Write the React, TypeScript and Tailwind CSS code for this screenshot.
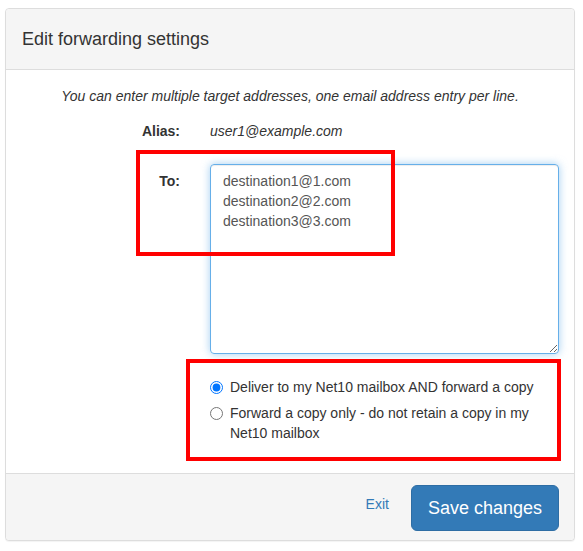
import { useState } from 'react';

const font = { fontFamily: '"Liberation Sans", Arial, Helvetica, sans-serif' };

export default function App() {
  const [mode, setMode] = useState<'copy' | 'forward'>('copy');
  const [targets, setTargets] = useState(
    'destination1@1.com\ndestination2@2.com\ndestination3@3.com'
  );

  return (
    <div className="min-h-[551px] bg-white pt-[8px] pl-[5px] text-[14px] text-[#333]" style={font}>
      <div className="relative w-[570px] rounded-[4px] border border-[#ddd] bg-white shadow-[0_1px_1px_rgba(0,0,0,0.05)]">
        {/* Heading */}
        <div className="flex h-[61px] items-center rounded-t-[4px] border-b border-[#ddd] bg-[#f5f5f5] px-[16px]">
          <h3 className="text-[18px] leading-[20px] text-[#333]">Edit forwarding settings</h3>
        </div>

        {/* Body */}
        <div className="px-[15px] pt-[16px] pb-[30px]">
          <p className="mb-[15px] text-center italic leading-[20px]">
            You can enter multiple target addresses, one email address entry per line.
          </p>

          <div className="mb-[23px] grid grid-cols-[159px_1fr] gap-x-[30px]">
            <span className="text-right font-bold leading-[20px]">Alias:</span>
            <span className="italic leading-[20px]">user1@example.com</span>
          </div>

          <div className="grid grid-cols-[159px_1fr] gap-x-[30px]">
            <label htmlFor="targets" className="pt-[7px] text-right font-bold leading-[20px]">
              To:
            </label>
            <textarea
              id="targets"
              value={targets}
              onChange={(e) => setTargets(e.target.value)}
              className="block h-[190px] w-full rounded-[4px] border border-[#66afe9] px-[12px] py-[6px] leading-[20px] text-[#555] shadow-[inset_0_1px_1px_rgba(0,0,0,0.075),0_0_8px_rgba(102,175,233,0.6)] outline-none"
              style={font}
            />

            <div className="col-start-2 mt-[23px] flex flex-col gap-[6px]">
              <label className="flex items-start gap-[7px] leading-[20px]">
                <input
                  type="radio"
                  name="mode"
                  checked={mode === 'copy'}
                  onChange={() => setMode('copy')}
                  className="m-0 mt-[4px] h-[13px] w-[13px] shrink-0"
                />
                <span>Deliver to my Net10 mailbox AND forward a copy</span>
              </label>
              <label className="flex items-start gap-[7px] leading-[20px]">
                <input
                  type="radio"
                  name="mode"
                  checked={mode === 'forward'}
                  onChange={() => setMode('forward')}
                  className="m-0 mt-[4px] h-[13px] w-[13px] shrink-0"
                />
                <span>Forward a copy only - do not retain a copy in my Net10 mailbox</span>
              </label>
            </div>
          </div>
        </div>

        {/* Footer */}
        <div className="flex h-[67px] items-start justify-end gap-[22px] rounded-b-[4px] border-t border-[#ddd] bg-[#f5f5f5] px-[15px] pt-[11px]">
          <a href="#" className="mt-[9px] text-[14px] leading-[20px] text-[#337ab7] hover:underline">
            Exit
          </a>
          <button className="rounded-[6px] border border-[#2e6da4] bg-[#337ab7] px-[16px] py-[10px] text-[18px] leading-[24px] text-white">
            Save changes
          </button>
        </div>

        {/* Annotation boxes */}
        <div className="pointer-events-none absolute left-[130px] top-[141px] h-[106px] w-[259px] border-[4px] border-[#f00]" />
        <div className="pointer-events-none absolute left-[180px] top-[350px] h-[102px] w-[375px] border-[4px] border-[#f00]" />
      </div>
    </div>
  );
}
